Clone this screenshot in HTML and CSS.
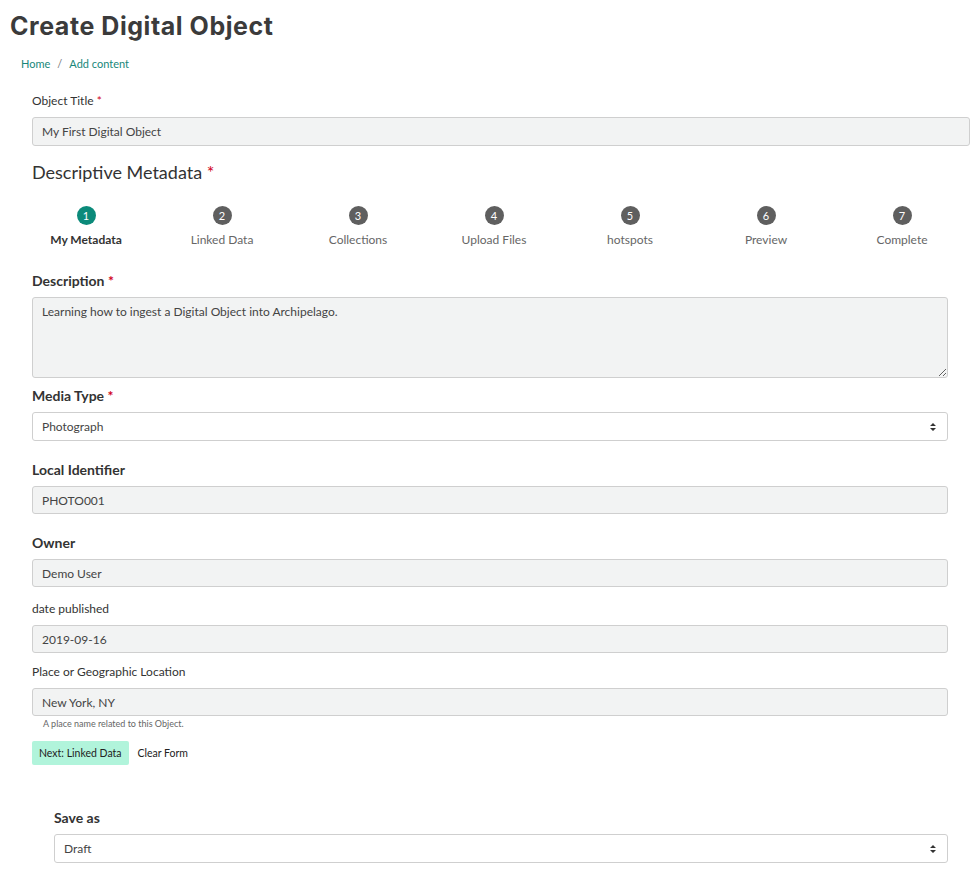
FILE: index.html
```html
<!DOCTYPE html>
<html lang="en">
<head>
<meta charset="utf-8">
<title>Create Digital Object</title>
<link rel="stylesheet" href="styles.css">
</head>
<body>
<header class="page-head">
  <h1 class="page-title">Create Digital Object</h1>
  <nav class="breadcrumb">
    <a href="#">Home</a><span class="sep">/</span><a href="#">Add content</a>
  </nav>
</header>

<main class="content">
  <div class="field">
    <label class="label-sm">Object Title <span class="req">*</span></label>
    <div class="input input-wide">My First Digital Object</div>
  </div>

  <h2 class="section-title">Descriptive Metadata <span class="req">*</span></h2>

  <ol class="stepper">
    <li class="step active"><span class="dot">1</span><span class="step-label">My Metadata</span></li>
    <li class="step"><span class="dot">2</span><span class="step-label">Linked Data</span></li>
    <li class="step"><span class="dot">3</span><span class="step-label">Collections</span></li>
    <li class="step"><span class="dot">4</span><span class="step-label">Upload Files</span></li>
    <li class="step"><span class="dot">5</span><span class="step-label">hotspots</span></li>
    <li class="step"><span class="dot">6</span><span class="step-label">Preview</span></li>
    <li class="step"><span class="dot">7</span><span class="step-label">Complete</span></li>
  </ol>

  <form class="meta-form">
    <div class="field f-desc">
      <label class="label-lg">Description <span class="req">*</span></label>
      <textarea class="textarea" rows="4">Learning how to ingest a Digital Object into Archipelago.</textarea>
    </div>

    <div class="field f-media">
      <label class="label-lg">Media Type <span class="req">*</span></label>
      <div class="select"><span>Photograph</span>
        <svg class="arrows" width="8" height="10" viewBox="0 0 8 10"><path d="M4 1 L7 4 H1 Z M4 9 L7 6 H1 Z" fill="#333"/></svg>
      </div>
    </div>

    <div class="field f-local">
      <label class="label-lg">Local Identifier</label>
      <div class="input">PHOTO001</div>
    </div>

    <div class="field f-owner">
      <label class="label-lg">Owner</label>
      <div class="input">Demo User</div>
    </div>

    <div class="field f-date">
      <label class="label-sm">date published</label>
      <div class="input">2019-09-16</div>
    </div>

    <div class="field f-place">
      <label class="label-sm">Place or Geographic Location</label>
      <div class="input">New York, NY</div>
      <div class="help">A place name related to this Object.</div>
    </div>

    <div class="actions">
      <button type="button" class="btn-next">Next: Linked Data</button>
      <button type="button" class="btn-clear">Clear Form</button>
    </div>
  </form>

  <div class="save-as">
    <label class="label-lg">Save as</label>
    <div class="select"><span>Draft</span>
      <svg class="arrows" width="8" height="10" viewBox="0 0 8 10"><path d="M4 1 L7 4 H1 Z M4 9 L7 6 H1 Z" fill="#333"/></svg>
    </div>
  </div>
</main>
</body>
</html>
```

FILE: styles.css
```css
* { box-sizing: border-box; }

html, body {
  margin: 0;
  padding: 0;
  background: #fff;
  font-family: Lato, "Open Sans", "Liberation Sans", sans-serif;
  color: #333;
}

.page-head {
  padding: 9px 0 0 10px;
}

.page-title {
  margin: 0;
  font-family: Inter, "Open Sans", sans-serif;
  font-weight: 700;
  font-size: 25px;
  line-height: 34px;
  color: #3b3b3b;
  letter-spacing: 0.55px;
}

.breadcrumb {
  margin: 14px 0 0 11px;
  font-size: 11px;
  line-height: 14px;
}

.breadcrumb a {
  color: #17877a;
  text-decoration: none;
}

.breadcrumb .sep {
  color: #777;
  margin: 0 7px;
}

.content {
  padding: 0 3px 0 32px;
}

.field {
  display: flex;
  flex-direction: column;
}

.content > .field:first-child {
  margin-top: 22px;
}

.label-sm {
  font-size: 12px;
  line-height: 16px;
  color: #333;
  margin-bottom: 8px;
}

.label-lg {
  font-size: 14px;
  line-height: 18px;
  font-weight: 700;
  color: #333;
  margin-bottom: 7px;
}

.req {
  color: #d0021b;
}

.input {
  height: 28px;
  padding: 0 9px;
  display: flex;
  align-items: center;
  font-size: 12px;
  color: #444;
  background: #f2f3f3;
  border: 1px solid #cfcfcf;
  border-radius: 3px;
}

.input-wide {
  height: 29px;
}

.section-title {
  margin: 14px 0 0;
  font-size: 18px;
  line-height: 24px;
  font-weight: 400;
  color: #333;
}

.stepper {
  list-style: none;
  margin: 22px 0 0 -14px;
  padding: 0;
  display: grid;
  grid-template-columns: repeat(7, 136px);
}

.step {
  display: flex;
  flex-direction: column;
  align-items: center;
}

.dot {
  width: 19px;
  height: 19px;
  border-radius: 50%;
  background: #5f5f5f;
  color: #fff;
  font-size: 11px;
  line-height: 19px;
  text-align: center;
}

.step-label {
  margin-top: 7px;
  font-size: 12px;
  line-height: 16px;
  color: #666;
}

.step.active .dot {
  background: #0b8a7a;
}

.step.active .step-label {
  color: #333;
  font-weight: 700;
}

.meta-form {
  margin-right: 22px;
}

.f-desc { margin-top: 24px; }
.f-media { margin-top: 9px; }
.f-local { margin-top: 20px; }
.f-owner { margin-top: 20px; }
.f-date { margin-top: 14px; }
.f-place { margin-top: 11px; }

.textarea {
  display: block;
  width: 100%;
  height: 81px;
  margin: 0;
  padding: 6px 9px;
  font-family: inherit;
  font-size: 12px;
  line-height: 16px;
  color: #444;
  background: #f2f3f3;
  border: 1px solid #cfcfcf;
  border-radius: 3px;
  resize: vertical;
}

.select {
  height: 29px;
  padding: 0 9px;
  display: flex;
  align-items: center;
  justify-content: space-between;
  font-size: 12px;
  color: #444;
  background: #fff;
  border: 1px solid #cfcfcf;
  border-radius: 3px;
}

.arrows {
  margin-right: 1px;
}

.help {
  margin: 2px 0 0 11px;
  font-size: 9px;
  line-height: 12px;
  color: #666;
}

.actions {
  margin-top: 11px;
  display: flex;
  align-items: center;
  gap: 1px;
}

.btn-next {
  height: 24px;
  padding: 0 7px;
  font-family: inherit;
  font-size: 10.5px;
  color: #222;
  background: #b1f4db;
  border: 0;
  border-radius: 2px;
}

.btn-clear {
  height: 24px;
  padding: 0 8px;
  font-family: inherit;
  font-size: 10.5px;
  color: #222;
  background: transparent;
  border: 0;
}

.save-as {
  margin: 44px 22px 0 22px;
  display: flex;
  flex-direction: column;
}
```
